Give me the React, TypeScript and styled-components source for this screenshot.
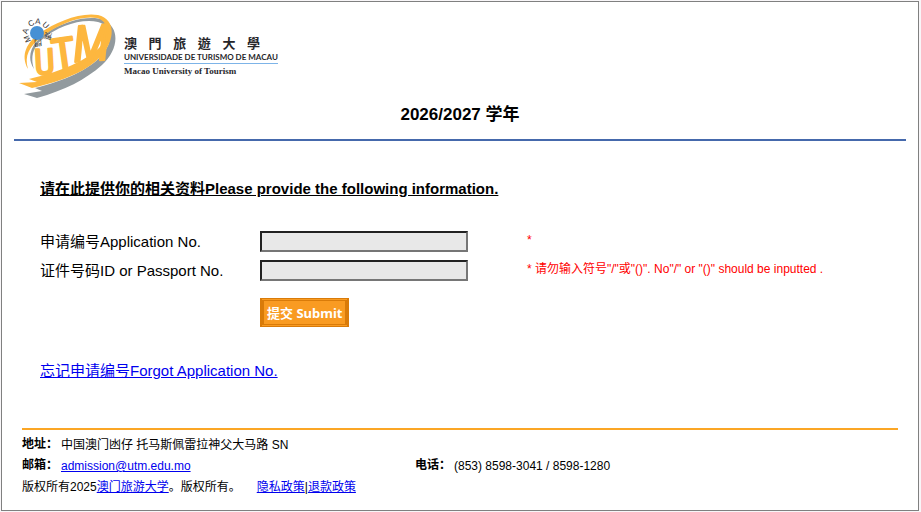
import React from "react";
import styled, { createGlobalStyle } from "styled-components";

const sans = `"Liberation Sans", "Noto Sans CJK SC", sans-serif`;

const GlobalStyle = createGlobalStyle`
  * { box-sizing: border-box; }
  body {
    margin: 0;
    background: #f8f6f8;
    color: #000;
    font-family: ${sans};
    font-size: 15px;
  }
`;

const Frame = styled.div`
  margin: 1px 2px 1px 1px;
  padding: 0 12px;
  border: 1px solid #808080;
  background: #fff;
`;

const Header = styled.header`
  border-bottom: 2px solid #4569ac;
`;

const Brand = styled.div`
  display: flex;
  align-items: flex-start;
  height: 98px;
`;

const Mark = styled.svg`
  flex: none;
  width: 104px;
  height: 98px;
`;

const Wordmark = styled.div`
  display: flex;
  flex-direction: column;
  margin-top: 32px;
  padding-left: 6px;
  color: #26262a;
`;

const ChineseName = styled.div`
  display: flex;
  justify-content: space-between;
  width: 136px;
  font: 700 13px/17px "Noto Sans CJK TC", sans-serif;
`;

const PortugueseName = styled.div`
  border-bottom: 1px solid #7db4e8;
  font: 700 8px/12px Lato, sans-serif;
`;

const EnglishName = styled.div`
  font: 700 9px/14px "Liberation Serif", serif;
`;

const Title = styled.h1`
  margin: 0;
  padding: 2px 0 12px;
  font-size: 17px;
  line-height: 25px;
  text-align: center;
`;

const Form = styled.form`
  padding: 36px 26px 48px;
`;

const Heading = styled.h2`
  margin: 0 0 29px;
  font-size: 15px;
  line-height: 24px;
  text-decoration: underline;
`;

const Field = styled.div`
  display: grid;
  grid-template-columns: 220px 208px 1fr;
  align-items: start;
  height: 29px;
`;

const Label = styled.label`
  line-height: 24px;
`;

const TextBox = styled.input`
  width: 100%;
  height: 21px;
  margin-top: 1px;
  padding: 1px 2px;
  border: 2px solid;
  border-color: #212121 #767676 #767676 #212121;
  border-radius: 0;
  background: #e8e8e8;
  font: 13px ${sans};
`;

const Note = styled.span`
  padding-left: 59px;
  color: #f00;
  font-size: 12px;
  line-height: 20px;
`;

const Submit = styled.button`
  display: block;
  height: 29px;
  margin: 10px 0 32px 220px;
  padding: 0 3px;
  border: 4px double #d97b09;
  border-width: 3px 4px;
  border-left-style: solid;
  border-right-style: solid;
  border-radius: 0;
  background: #f99b22;
  color: #fff;
  font: 700 13px/20px "Noto Sans", "Noto Sans CJK SC", sans-serif;
`;

const Link = styled.a`
  color: #00e;
  text-decoration: underline;
`;

const Footer = styled.footer`
  margin: 0 8px;
  padding: 5px 0 12px;
  border-top: 2px solid #fba625;
  font-size: 12px;
  line-height: 21px;
`;

const Contacts = styled.dl`
  display: grid;
  grid-template-columns: 393px 1fr;
  margin: 0;
`;

const Contact = styled.div<{ $wide?: boolean }>`
  display: flex;
  grid-column: ${(p) => (p.$wide ? "1 / -1" : "auto")};
`;

const Term = styled.dt`
  width: 39px;
  font-weight: 700;
  line-height: 18px;
  white-space: nowrap;
`;

const Detail = styled.dd`
  margin: 0;
`;

const Legal = styled.div`
  display: flex;
  gap: 16px;
`;

const ringLetters = [
  { char: "M", x: 27, y: 39, turn: -112 },
  { char: "A", x: 25, y: 31, turn: -70 },
  { char: "C", x: 31, y: 23, turn: -30 },
  { char: "A", x: 38, y: 21, turn: 5 },
  { char: "U", x: 46, y: 25, turn: 45 },
  { char: "澳", x: 48, y: 36, turn: 100 },
  { char: "門", x: 38, y: 43, turn: 175 },
];

function Logo() {
  return (
    <Mark viewBox="14 2 104 98" role="img" aria-label="UTM">
      <path
        fill="#929a9e"
        d="M34 69C24 54 35 39 51 30C69 20 90 15 104 20C121 29 118 50 102 65C85 80 65 90 37 98L24 94L42 91L35 88C63 81 90 70 103 54C113 41 113 26 98 22C81 18 57 27 44 38C33 46 30 57 34 69Z"
      />
      <path
        fill="#fdb73f"
        d="M28 69C20 55 27 42 40 33C56 22 80 12 98 15C117 20 114 40 103 54C89 71 62 81 32 88L19 83L37 82L29 79C55 73 83 63 99 48C110 36 110 22 97 18C80 15 57 25 43 36C29 46 24 56 28 69Z"
      />
      <g
        fill="#fdb73f"
        stroke="#fdb73f"
        strokeWidth="2"
        strokeLinejoin="round"
        fontFamily="'Roboto Condensed', 'Open Sans Condensed', 'Liberation Sans', sans-serif"
      >
        <text x="35" y="75" fontSize="36" transform="rotate(-3 35 75)">U</text>
        <text x="54" y="72" fontSize="46" transform="rotate(-8 54 72)">T</text>
        <text x="74" y="62" fontSize="50" fontStyle="italic" transform="rotate(-4 74 62)">M</text>
      </g>
      <circle cx="37" cy="33" r="7" fill="#4690d4" />
      <g fill="#333" fontFamily="'Liberation Sans', 'Noto Sans CJK TC', sans-serif" fontSize="8" textAnchor="middle">
        {ringLetters.map((l, i) => (
          <text key={i} x={l.x} y={l.y} dy="3" transform={`rotate(${l.turn} ${l.x} ${l.y})`}>
            {l.char}
          </text>
        ))}
      </g>
    </Mark>
  );
}

export default function App() {
  return (
    <>
      <GlobalStyle />
      <Frame>
        <Header>
          <Brand>
            <Logo />
            <Wordmark>
              <ChineseName>
                {[..."澳門旅遊大學"].map((c) => (
                  <span key={c}>{c}</span>
                ))}
              </ChineseName>
              <PortugueseName>UNIVERSIDADE DE TURISMO DE MACAU</PortugueseName>
              <EnglishName>Macao University of Tourism</EnglishName>
            </Wordmark>
          </Brand>
          <Title>2026/2027 学年</Title>
        </Header>
        <Form onSubmit={(e) => e.preventDefault()}>
          <Heading>请在此提供你的相关资料Please provide the following information.</Heading>
          <Field>
            <Label htmlFor="application">申请编号Application No.</Label>
            <TextBox id="application" type="text" />
            <Note>*</Note>
          </Field>
          <Field>
            <Label htmlFor="passport">证件号码ID or Passport No.</Label>
            <TextBox id="passport" type="text" />
            <Note>* 请勿输入符号"/"或"()". No"/" or "()" should be inputted .</Note>
          </Field>
          <Submit type="submit">提交 Submit</Submit>
          <Link href="#forgot">忘记申请编号Forgot Application No.</Link>
        </Form>
        <Footer>
          <Contacts>
            <Contact $wide>
              <Term>地址：</Term>
              <Detail>中国澳门凼仔 托马斯佩雷拉神父大马路 SN</Detail>
            </Contact>
            <Contact>
              <Term>邮箱：</Term>
              <Detail>
                <Link href="mailto:admission@utm.edu.mo">admission@utm.edu.mo</Link>
              </Detail>
            </Contact>
            <Contact>
              <Term>电话：</Term>
              <Detail>(853) 8598-3041 / 8598-1280</Detail>
            </Contact>
          </Contacts>
          <Legal>
            <span>
              版权所有2025<Link href="#university">澳门旅游大学</Link>。版权所有。
            </span>
            <span>
              <Link href="#privacy">隐私政策</Link>|<Link href="#refund">退款政策</Link>
            </span>
          </Legal>
        </Footer>
      </Frame>
    </>
  );
}
